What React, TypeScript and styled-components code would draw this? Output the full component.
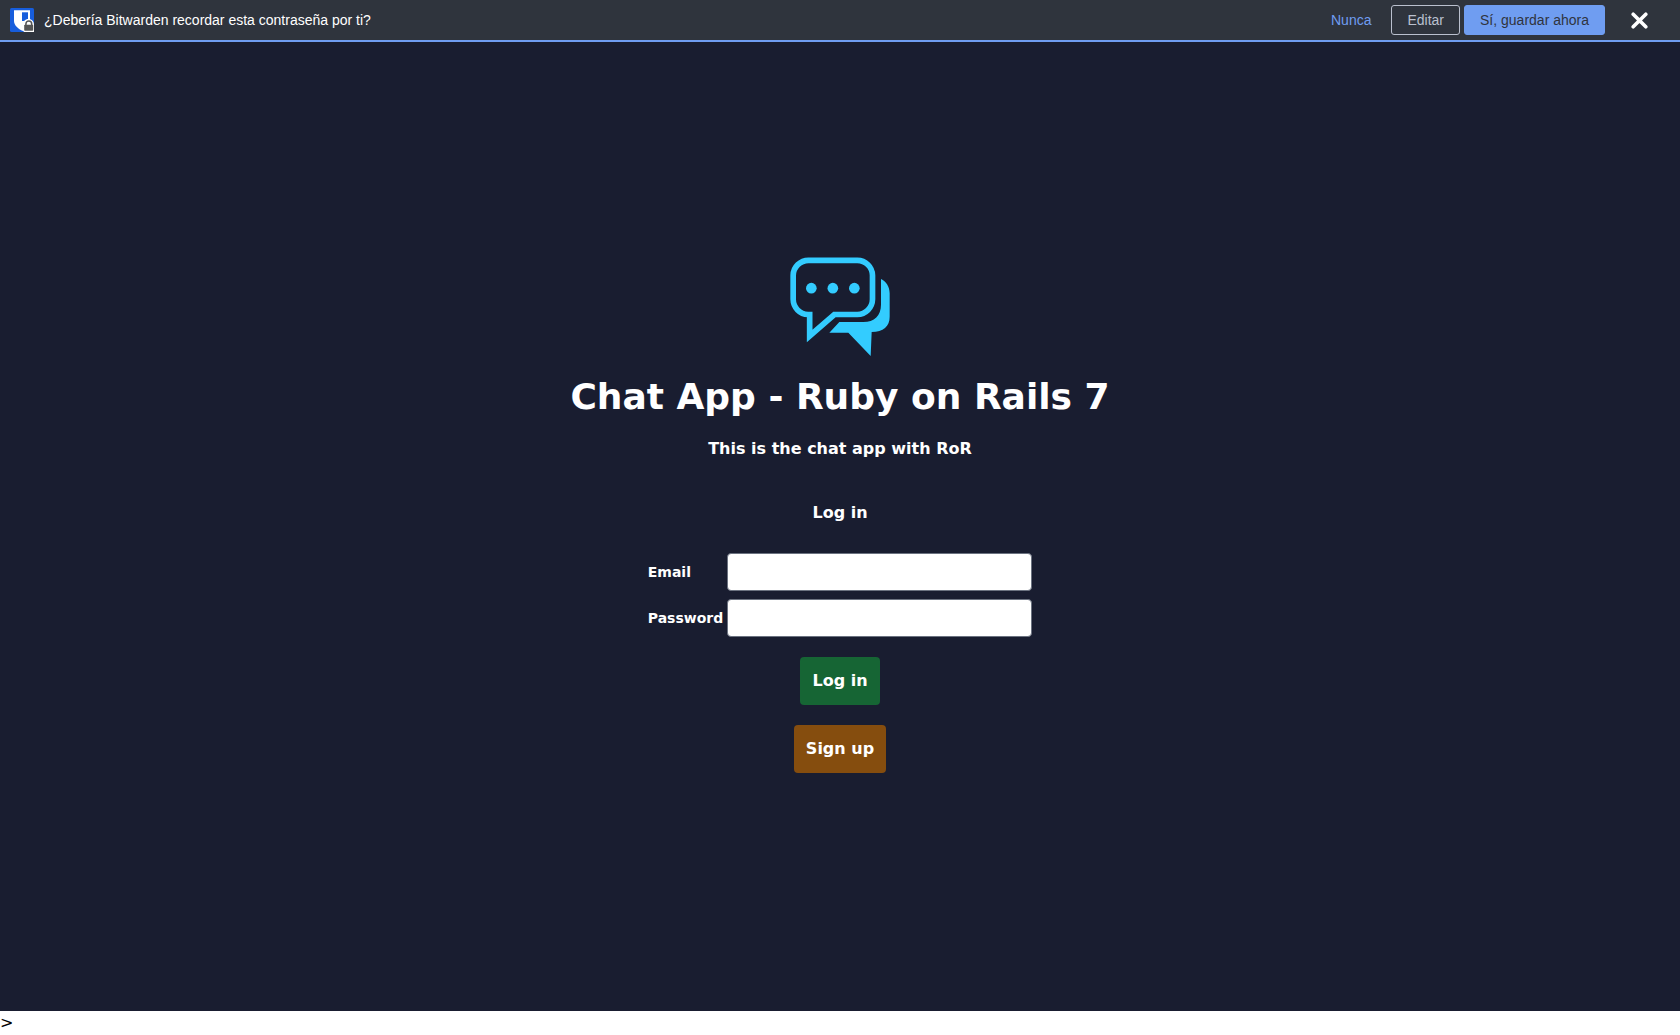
import React from "react";
import styled, { createGlobalStyle } from "styled-components";

const GlobalStyle = createGlobalStyle`
  *, *::before, *::after { box-sizing: border-box; }
  body {
    margin: 0;
    background: #ffffff;
    color: #000000;
    font-family: "DejaVu Sans", sans-serif;
    font-size: 16px;
    line-height: 24px;
  }
`;

const Page = styled.div`
  min-height: 100vh;
  display: flex;
  flex-direction: column;
`;

const Bar = styled.header`
  display: flex;
  align-items: center;
  padding: 5px 24px 5px 10px;
  background: #2f343d;
  border-bottom: 2px solid #6f9df1;
  color: #ffffff;
  font-family: "Liberation Sans", Arial, sans-serif;
  font-size: 14px;
  line-height: 16px;
`;

const BarText = styled.span`
  flex: 1;
  margin-left: 10px;
`;

const BarActions = styled.div`
  display: flex;
  align-items: center;
  gap: 4px;
`;

const BarButton = styled.button<{ $kind: "link" | "outline" | "primary" }>`
  height: 30px;
  padding: 0 15px;
  border: 1px solid
    ${({ $kind }) => ($kind === "outline" ? "#bac0ce" : $kind === "primary" ? "#6f9df1" : "transparent")};
  border-radius: 3px;
  background: ${({ $kind }) => ($kind === "primary" ? "#6f9df1" : "transparent")};
  color: ${({ $kind }) => ($kind === "outline" ? "#bac0ce" : $kind === "primary" ? "#2f343d" : "#6f9df1")};
  font: inherit;
  cursor: pointer;
`;

const CloseButton = styled.button`
  display: flex;
  margin-left: 18px;
  padding: 4px 8px;
  border: 0;
  background: transparent;
  cursor: pointer;
`;

const Main = styled.main`
  flex: 1;
  display: flex;
  flex-direction: column;
  align-items: center;
  justify-content: center;
  padding-bottom: 24px;
  background: #191d30;
  color: #ffffff;
  font-weight: 700;
`;

const Title = styled.h1`
  margin: 20px 0;
  font-size: 36px;
  line-height: 40px;
`;

const Text = styled.p`
  margin: 0;
`;

const FormTitle = styled.h2`
  margin: 40px 0 28px;
  font-size: 16px;
  line-height: 24px;
`;

const Form = styled.form`
  display: flex;
  flex-direction: column;
  align-items: center;
  gap: 20px;
`;

const Fields = styled.div`
  display: grid;
  grid-template-columns: auto 305px;
  align-items: center;
  gap: 8px 4px;
`;

const Label = styled.label`
  font-size: 14px;
  line-height: 20px;
`;

const Input = styled.input`
  width: 100%;
  height: 38px;
  padding: 8px 12px;
  border: 1px solid #6b7280;
  border-radius: 4px;
  background: #ffffff;
  color: #111827;
  font: inherit;
  font-weight: 400;
`;

const ActionButton = styled.button<{ $color: string }>`
  height: 48px;
  padding: 0 12px;
  border: 0;
  border-radius: 4px;
  background: ${({ $color }) => $color};
  color: #ffffff;
  font: inherit;
  cursor: pointer;
`;

const Footer = styled.footer`
  height: 24px;
`;

function VaultLogo() {
  return (
    <svg width="24" height="24" viewBox="0 0 24 24" aria-hidden="true">
      <rect width="24" height="24" rx="1.5" fill="#175ddc" />
      <path d="M4 2.200h16V13c0 5-4 8-7 10C8 21 4 17 4 13z" fill="#fff" />
      <path d="M12 4.300h6V13h-6z" fill="#175ddc" />
      <path d="M12.500 17c.5-3.500 2.500-6 6-6s5.500 2.500 5.500 6v7H14c-1.500-1.500-2-4-1.500-7z" fill="#fff" />
      <path d="M15.900 17.500v-1.600a2.900 2.900 0 0 1 5.800 0v1.600" fill="none" stroke="#555" strokeWidth="1.500" />
      <rect x="14.200" y="16.800" width="9" height="6" rx=".8" fill="#555" />
    </svg>
  );
}

function CloseIcon() {
  return (
    <svg width="17" height="17" viewBox="0 0 17 17" aria-hidden="true">
      <path d="M2.200 2.200 14.800 14.800M14.800 2.200 2.200 14.800" stroke="#fff" strokeWidth="3.600" strokeLinecap="round" />
    </svg>
  );
}

function ChatLogo() {
  return (
    <svg width="100" height="100" viewBox="30 21 300 300" aria-hidden="true">
      <path
        d="M89 193.500V258L163 193.500H232A46 46 0 0 0 277.500 148V76A46 46 0 0 0 232 31H86A46 46 0 0 0 39.500 76V148A46 46 0 0 0 84 193.500Z"
        fill="none"
        stroke="#33ccff"
        strokeWidth="17"
      />
      <circle cx="94" cy="114.500" r="16" fill="#33ccff" />
      <circle cx="158.500" cy="114.500" r="16" fill="#33ccff" />
      <circle cx="223" cy="114.500" r="16" fill="#33ccff" />
      <path
        d="M303 87C318 94 329 110 329 130V200C329 229 310 246 275 246L272 318L205 248H148L178 216H250C283 216 303 196 303 164Z"
        fill="#33ccff"
      />
    </svg>
  );
}

export default function App() {
  return (
    <Page>
      <GlobalStyle />
      <Bar>
        <VaultLogo />
        <BarText>¿Debería Bitwarden recordar esta contraseña por ti?</BarText>
        <BarActions>
          <BarButton type="button" $kind="link">Nunca</BarButton>
          <BarButton type="button" $kind="outline">Editar</BarButton>
          <BarButton type="button" $kind="primary">Sí, guardar ahora</BarButton>
        </BarActions>
        <CloseButton type="button" aria-label="Cerrar">
          <CloseIcon />
        </CloseButton>
      </Bar>
      <Main>
        <ChatLogo />
        <Title>Chat App - Ruby on Rails 7</Title>
        <Text>This is the chat app with RoR</Text>
        <FormTitle>Log in</FormTitle>
        <Form onSubmit={(event) => event.preventDefault()}>
          <Fields>
            <Label htmlFor="email">Email</Label>
            <Input id="email" type="email" />
            <Label htmlFor="password">Password</Label>
            <Input id="password" type="password" />
          </Fields>
          <ActionButton type="submit" $color="#166534">Log in</ActionButton>
          <ActionButton type="button" $color="#854d0e">Sign up</ActionButton>
        </Form>
      </Main>
      <Footer>&gt;</Footer>
    </Page>
  );
}
